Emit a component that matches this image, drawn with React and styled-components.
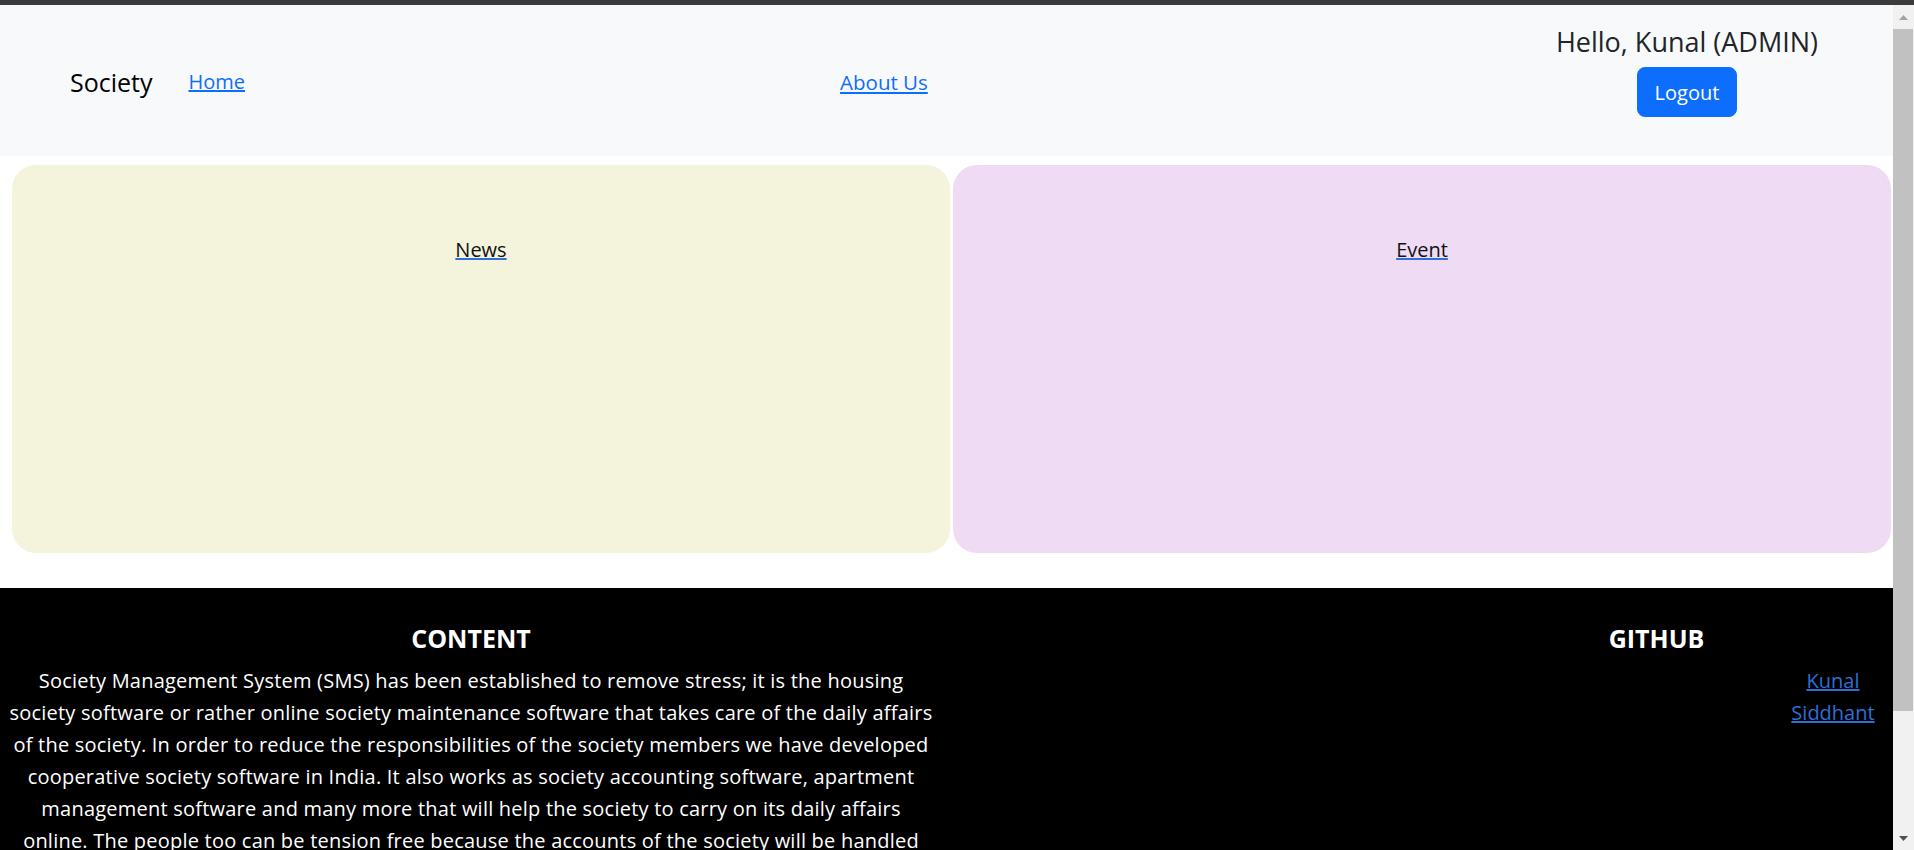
import React from 'react';
import styled, { createGlobalStyle } from 'styled-components';

const GlobalStyle = createGlobalStyle`
  body {
    margin: 0;
    border-top: 5px solid #3b3b3d;
    font-family: 'Open Sans', 'Noto Sans', sans-serif;
    color: #212529;
    background: #fff;
    overflow: hidden;
  }
  * {
    box-sizing: border-box;
  }
`;

const people = [
  { name: 'Kunal', href: '#kunal' },
  { name: 'Siddhant', href: '#siddhant' },
];

const App = () => {
  return (
    <>
      <GlobalStyle />
      <Screen>
        <Page>
          <Navbar>
            <Brand>Society</Brand>
            <NavLink href="#home">Home</NavLink>
            <AboutLink href="#about">About Us</AboutLink>
            <UserBox>
              <Greeting>Hello, Kunal (ADMIN)</Greeting>
              <LogoutButton>Logout</LogoutButton>
            </UserBox>
          </Navbar>

          <Boards>
            <Board $bg="#f4f4dc">
              <BoardLink href="#news">News</BoardLink>
            </Board>
            <Board $bg="#efdcf4">
              <BoardLink href="#event">Event</BoardLink>
            </Board>
          </Boards>

          <Footer>
            <ContentCol>
              <FooterTitle>CONTENT</FooterTitle>
              <FooterText>
                Society Management System (SMS) has been established to remove stress; it is the housing
                society software or rather online society maintenance software that takes care of the daily affairs
                of the society. In order to reduce the responsibilities of the society members we have developed
                cooperative society software in India. It also works as society accounting software, apartment
                management software and many more that will help the society to carry on its daily affairs
                online. The people too can be tension free because the accounts of the society will be handled
                transparently and securely by the software.
              </FooterText>
            </ContentCol>
            <GithubCol>
              <FooterTitle>GITHUB</FooterTitle>
              <LinkList>
                {people.map((p) => (
                  <li key={p.name}>
                    <FooterLink href={p.href}>{p.name}</FooterLink>
                  </li>
                ))}
              </LinkList>
            </GithubCol>
          </Footer>
        </Page>

        {/* browser scrollbar as it shows in the capture */}
        <ScrollRail>
          <ArrowButton>
            <svg width="9" height="5" viewBox="0 0 9 5">
              <path d="M0 5 L4.5 0 L9 5 Z" fill="#a3a3a3" />
            </svg>
          </ArrowButton>
          <ScrollThumb />
          <ScrollTrack />
          <ArrowButton>
            <svg width="9" height="5" viewBox="0 0 9 5">
              <path d="M0 0 L4.5 5 L9 0 Z" fill="#505050" />
            </svg>
          </ArrowButton>
        </ScrollRail>
      </Screen>
    </>
  );
};

export default App;

const Screen = styled.div`
  display: flex;
  height: 845px;
`;

const Page = styled.main`
  flex: 1;
  min-width: 0;
  overflow: hidden;
`;

const ScrollRail = styled.aside`
  display: flex;
  flex-direction: column;
  width: 21px;
  background: #f1f1f1;
`;

const ArrowButton = styled.div`
  display: flex;
  align-items: center;
  justify-content: center;
  height: 24px;
  flex-shrink: 0;
`;

const ScrollThumb = styled.div`
  height: 682px;
  margin: 0 1px 0 0;
  background: #c1c1c1;
`;

const ScrollTrack = styled.div`
  flex: 1;
`;

const Navbar = styled.nav`
  display: flex;
  align-items: center;
  height: 151px;
  padding: 0 56px 0 70px;
  background: #f8f9fa;
`;

const Brand = styled.span`
  font-size: 25px;
  color: #000;
  margin-right: 36px;
  padding-top: 2px;
`;

const NavLink = styled.a`
  font-size: 20px;
  color: #0d6efd;
  text-decoration: underline;
  padding-top: 2px;
`;

const AboutLink = styled(NavLink)`
  margin-left: 595px;
  font-size: 20.5px;
`;

const UserBox = styled.div`
  margin-left: auto;
  align-self: flex-start;
  width: 300px;
  padding-top: 20px;
  display: flex;
  flex-direction: column;
  align-items: center;
`;

const Greeting = styled.h4`
  margin: 0 0 8px;
  font-size: 27px;
  font-weight: 500;
  line-height: 34px;
  color: #212529;
`;

const LogoutButton = styled.button`
  height: 50px;
  padding: 0 17px;
  font-family: inherit;
  font-size: 20px;
  color: #fff;
  background: #0d6efd;
  border: 1px solid #0d6efd;
  border-radius: 8px;
  cursor: pointer;
`;

const Boards = styled.section`
  display: grid;
  grid-template-columns: 1fr 1fr;
  gap: 3px;
  padding: 9px 2px 0 12px;
`;

const Board = styled.div`
  height: 388px;
  padding-top: 70px;
  text-align: center;
  background: ${(p) => p.$bg};
  border-radius: 24px;
`;

const BoardLink = styled.a`
  font-size: 20px;
  line-height: 30px;
  color: #111;
  text-decoration: underline;
  text-decoration-color: #2f6fd8;
`;

const Footer = styled.footer`
  display: flex;
  margin-top: 35px;
  min-height: 420px;
  padding: 33px 0 40px 9px;
  background: #000;
  color: #fff;
`;

const ContentCol = styled.div`
  width: 924px;
  text-align: center;
`;

const GithubCol = styled.div`
  margin-left: auto;
  width: 473px;
  display: flex;
  flex-direction: column;
  align-items: center;
`;

const FooterTitle = styled.h5`
  margin: 0 0 10px;
  font-size: 25px;
  font-weight: 700;
  line-height: 34px;
`;

const FooterText = styled.p`
  margin: 0;
  font-size: 20px;
  letter-spacing: 0.22px;
  line-height: 32px;
`;

const LinkList = styled.ul`
  list-style: none;
  margin: 0;
  padding: 0;
  align-self: flex-end;
  width: 120px;
  text-align: center;
  font-size: 20px;
  line-height: 32px;
`;

const FooterLink = styled.a`
  color: #2f6fd8;
  text-decoration: underline;
`;
